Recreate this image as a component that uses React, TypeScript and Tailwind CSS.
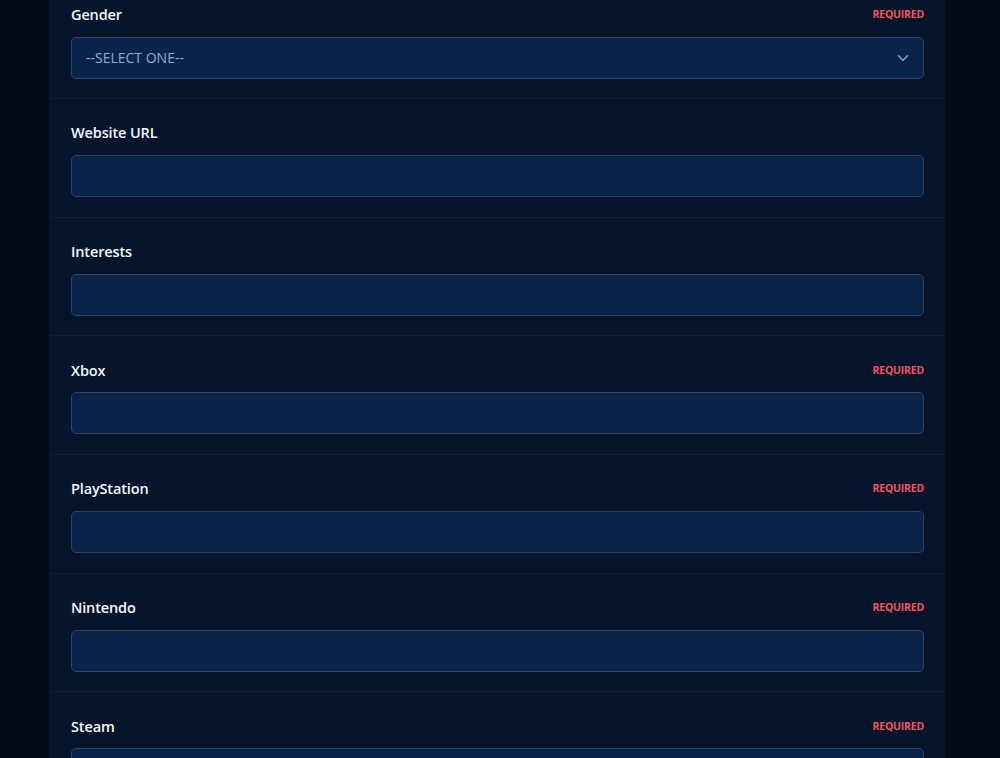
import React from 'react';

interface Field {
  label: string;
  required?: boolean;
  select?: boolean;
}

const fields: Field[] = [
  { label: 'Gender', required: true, select: true },
  { label: 'Website URL' },
  { label: 'Interests' },
  { label: 'Xbox', required: true },
  { label: 'PlayStation', required: true },
  { label: 'Nintendo', required: true },
  { label: 'Steam', required: true },
];

const ChevronDown = () => (
  <svg width="18" height="18" viewBox="0 0 24 24" fill="none" stroke="currentColor" strokeWidth="2" strokeLinecap="round" strokeLinejoin="round">
    <path d="M6 9l6 6 6-6" />
  </svg>
);

const FormRow = ({ field, last }: { field: Field; last: boolean }) => (
  <div className={`pl-[22px] pr-[21px] pt-[22px] pb-[19.67px] ${last ? '' : 'border-b border-[#0d1e37]'}`}>
    <div className="flex items-center justify-between h-[24px] mb-[10px]">
      <label className="text-[14.5px] font-semibold tracking-[-0.01em] text-[#f5f8fc]">{field.label}</label>
      {field.required && (
        <span className="text-[10.5px] font-bold tracking-[-0.02em] text-[#f0545a]">REQUIRED</span>
      )}
    </div>
    {field.select ? (
      <div className="h-[42px] rounded-[5px] border border-[#2a446e] bg-[#0a2348] flex items-center justify-between pl-[14px] pr-[11px]">
        <span className="text-[14px] text-[#90aad6]">--SELECT ONE--</span>
        <span className="text-[#94a6c4]"><ChevronDown /></span>
      </div>
    ) : (
      <input
        type="text"
        className="block w-full h-[42px] rounded-[5px] border border-[#2a446e] bg-[#0a2348] px-[14px] text-[14px] text-[#e5ecf7] outline-none"
      />
    )}
  </div>
);

export default function App() {
  return (
    <div
      className="h-[758px] overflow-hidden bg-[#050b15]"
      style={{ fontFamily: '"Open Sans", "Noto Sans", sans-serif' }}
    >
      <div className="ml-[49px] w-[896px] h-full bg-[#06142b] overflow-hidden">
        <div className="-mt-[19.5px]">
          {fields.map((f, i) => (
            <FormRow key={f.label} field={f} last={i === fields.length - 1} />
          ))}
        </div>
      </div>
    </div>
  );
}
